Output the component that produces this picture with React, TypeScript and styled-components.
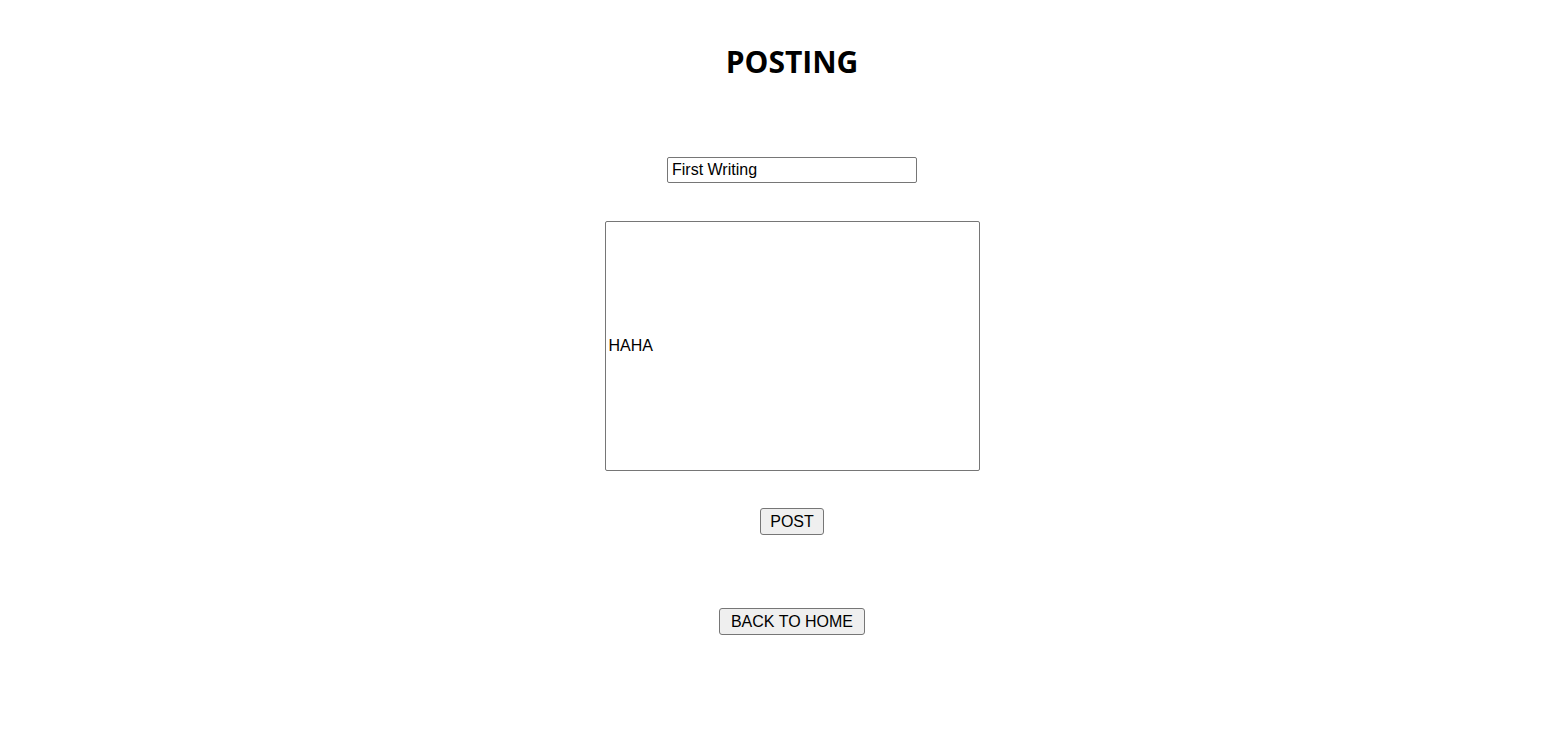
import React, { useState } from "react";
import styled, { createGlobalStyle } from "styled-components";

const GlobalStyle = createGlobalStyle`
  body {
    margin: 0;
    background: #ffffff;
    font-family: "Liberation Sans", Arial, sans-serif;
    color: #000000;
  }
`;

function App() {
  const [title, setTitle] = useState("First Writing");
  const [content, setContent] = useState("HAHA");

  return (
    <>
      <GlobalStyle />
      <Page>
        <Title>POSTING</Title>
        <TitleInput
          type="text"
          value={title}
          onChange={(e) => setTitle(e.target.value)}
        />
        <ContentInput
          type="text"
          value={content}
          onChange={(e) => setContent(e.target.value)}
        />
        <Button>POST</Button>
        <Button $gap={73} $padX={11}>
          BACK TO HOME
        </Button>
      </Page>
    </>
  );
}

export default App;

const Page = styled.div`
  margin-left: 24px;
  display: flex;
  flex-direction: column;
  align-items: center;
  padding-top: 40px;
`;

const Title = styled.h1`
  margin: 0;
  font-family: "Open Sans", "Noto Sans", sans-serif;
  font-weight: 700;
  font-size: 30px;
  line-height: 44px;
`;

const TitleInput = styled.input`
  box-sizing: border-box;
  margin-top: 73px;
  width: 250px;
  height: 26px;
  padding: 1px 4px;
  border: 1px solid #767676;
  border-radius: 2px;
  font-family: "Liberation Sans", Arial, sans-serif;
  font-size: 16px;
  color: #000000;
  outline: none;
`;

const ContentInput = styled.input`
  box-sizing: border-box;
  margin-top: 38px;
  width: 375px;
  height: 250px;
  padding: 1px 3px;
  border: 1px solid #767676;
  border-radius: 2px;
  font-family: "Liberation Sans", Arial, sans-serif;
  font-size: 16px;
  color: #000000;
  outline: none;
`;

const Button = styled.button<{ $gap?: number; $padX?: number }>`
  box-sizing: border-box;
  margin-top: ${(p) => p.$gap ?? 37}px;
  height: 27px;
  padding: 0 ${(p) => p.$padX ?? 9}px;
  border: 1px solid #767676;
  border-radius: 3px;
  background: #efefef;
  font-family: "Liberation Sans", Arial, sans-serif;
  font-size: 16px;
  color: #000000;
  cursor: pointer;
`;
